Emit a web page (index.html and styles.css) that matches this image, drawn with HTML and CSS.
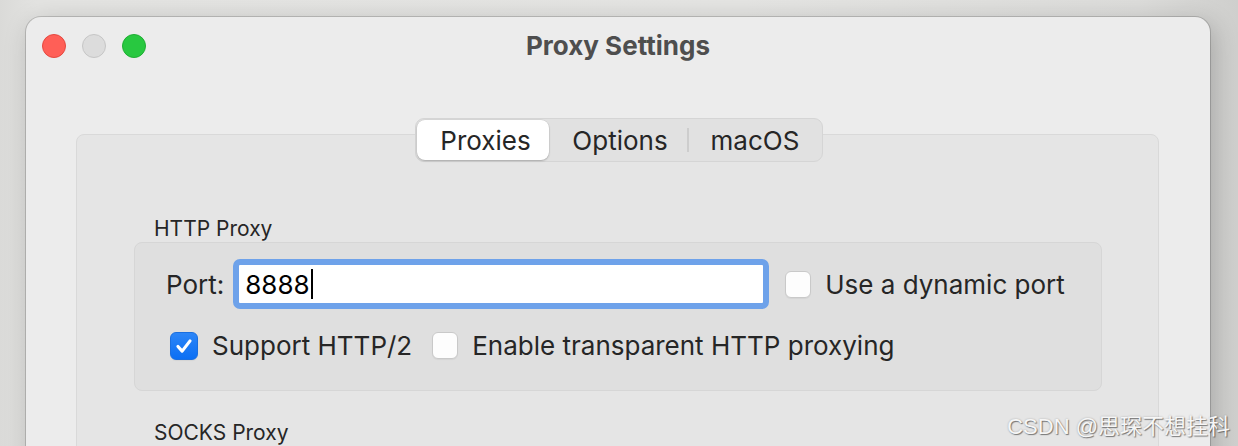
FILE: index.html
```html
<!DOCTYPE html>
<html lang="en">
<head>
<meta charset="utf-8">
<title>Proxy Settings</title>
<link rel="stylesheet" href="styles.css">
</head>
<body>
  <div class="window">
    <header class="titlebar">
      <div class="lights">
        <span class="light close"></span>
        <span class="light min"></span>
        <span class="light zoom"></span>
      </div>
      <h1 class="title">Proxy Settings</h1>
      <div class="spacer"></div>
    </header>

    <main class="content">
      <nav class="segmented">
        <button class="seg seg-proxies active">Proxies</button>
        <button class="seg seg-options">Options</button>
        <span class="seg-divider"></span>
        <button class="seg seg-macos">macOS</button>
      </nav>

      <section class="tabpanel">
        <div class="group-label">HTTP Proxy</div>
        <div class="group">
          <div class="row row-port">
            <label class="field-label">Port:</label>
            <div class="textfield">
              <span class="value">8888</span><span class="caret"></span>
            </div>
            <label class="check">
              <span class="box"></span>
              <span class="check-text">Use a dynamic port</span>
            </label>
          </div>
          <div class="row row-options">
            <label class="check">
              <span class="box checked">
                <svg viewBox="0 0 28 28" width="28" height="28"><path d="M7.5 14.5 L12 19.5 L20.5 8.5" fill="none" stroke="#fff" stroke-width="3.4" stroke-linecap="round" stroke-linejoin="round"/></svg>
              </span>
              <span class="check-text">Support HTTP/2</span>
            </label>
            <label class="check">
              <span class="box"></span>
              <span class="check-text">Enable transparent HTTP proxying</span>
            </label>
          </div>
        </div>
        <div class="group-label socks">SOCKS Proxy</div>
      </section>
    </main>
  </div>
  <div class="watermark">CSDN @思琛不想挂科</div>
</body>
</html>
```
FILE: styles.css
```css
html, body {
  margin: 0;
  height: 100%;
  overflow: hidden;
}

body {
  background: linear-gradient(90deg, #dadad8 0%, #e3e3e1 3%, #e4e4e2 60%, #dcdcda 92%, #cfcfcd 100%);
  font-family: Inter, "Liberation Sans", "Noto Sans CJK SC", sans-serif;
  color: #262626;
  position: relative;
  display: flex;
  align-items: flex-start;
}

.window {
  margin: 17px 0 0 26px;
  width: 1184px;
  height: 520px;
  background: #ececec;
  border-radius: 15px;
  box-shadow: 0 0 0 1px rgba(0, 0, 0, 0.16), 4px 6px 26px rgba(0, 0, 0, 0.22);
  display: flex;
  flex-direction: column;
}

/* title bar */
.titlebar {
  display: grid;
  grid-template-columns: 1fr auto 1fr;
  align-items: center;
  height: 57px;
  padding: 0 16px;
}

.lights {
  display: flex;
  gap: 16px;
  padding-top: 1px;
}

.light {
  width: 24px;
  height: 24px;
  border-radius: 50%;
  box-sizing: border-box;
}

.light.close { background: #ff5f57; border: 1px solid #e5483f; }
.light.min { background: #dcdcdc; border: 1px solid #c6c6c6; }
.light.zoom { background: #28c840; border: 1px solid #1fae33; }

.title {
  margin: 0;
  font-size: 26px;
  font-weight: 700;
  color: #4e4e4e;
  padding-bottom: 1px;
}

/* content / tab view */
.content {
  display: flex;
  flex-direction: column;
  align-items: center;
  padding: 44px 51px 0 50px;
}

.segmented {
  position: relative;
  z-index: 1;
  display: flex;
  align-items: center;
  height: 44px;
  box-sizing: border-box;
  padding: 1px;
  background: #e1e1e1;
  border: 1px solid #d5d5d5;
  border-radius: 9px;
  margin-left: 3px;
}

.seg {
  font: inherit;
  font-size: 26px;
  color: #262626;
  background: transparent;
  border: none;
  height: 40px;
  padding: 0;
  margin: 0;
  border-radius: 8px;
}

.seg-proxies { width: 132px; padding-left: 5px; }
.seg-options { width: 138px; padding-left: 4px; }
.seg-macos { width: 132px; }

.seg.active {
  background: #ffffff;
  box-shadow: 0 1px 2px rgba(0, 0, 0, 0.22), 0 0 0 0.5px rgba(0, 0, 0, 0.08);
}

.seg-divider {
  width: 2px;
  height: 24px;
  background: #cdcdcd;
}

.tabpanel {
  align-self: stretch;
  margin-top: -28px;
  height: 400px;
  box-sizing: border-box;
  background: #e5e5e5;
  border: 1px solid #d9d9d9;
  border-radius: 8px;
  padding: 81px 56px 0 57px;
  display: flex;
  flex-direction: column;
}

.group-label {
  font-size: 21px;
  line-height: 26px;
  padding-left: 20px;
  color: #262626;
}

.group-label.socks {
  margin-top: 29px;
}

.group {
  background: #dfdfdf;
  border: 1px solid #d6d6d6;
  border-radius: 8px;
  padding: 16px 0 29px;
  display: flex;
  flex-direction: column;
  gap: 21px;
}

.row {
  display: flex;
  align-items: center;
}

.row-port {
  padding-left: 31px;
}

.row-options {
  padding-left: 35px;
  gap: 20px;
}

.field-label {
  font-size: 26px;
  margin-right: 9px;
}

.textfield {
  width: 536px;
  height: 50px;
  box-sizing: border-box;
  border: 6px solid #6ea2ea;
  border-radius: 7px;
  background: #ffffff;
  display: flex;
  align-items: center;
  padding-left: 6px;
  margin-right: 16px;
}

.textfield .value {
  font-size: 26px;
  color: #000;
}

.caret {
  width: 2px;
  height: 30px;
  background: #000;
  margin-left: 1px;
}

.check {
  display: flex;
  align-items: center;
  gap: 14px;
}

.box {
  width: 26px;
  height: 27px;
  box-sizing: border-box;
  background: #fdfdfd;
  border: 1px solid #c9c9c9;
  border-radius: 6px;
  box-shadow: 0 1px 1px rgba(0, 0, 0, 0.05);
  display: flex;
  align-items: center;
  justify-content: center;
}

.box.checked {
  width: 28px;
  height: 28px;
  background: linear-gradient(#2d86f7, #0b6ff4);
  border: 1px solid #1a6fe0;
}

.box.checked svg {
  display: block;
}

.check-text {
  font-size: 26px;
  color: #262626;
}

.watermark {
  position: absolute;
  right: 8px;
  bottom: 6px;
  font-size: 22px;
  color: #f6f6f6;
  text-shadow: 1px 1px 1px rgba(0, 0, 0, 0.45), 0 0 2px rgba(0, 0, 0, 0.25);
  font-family: "Liberation Sans", "Noto Sans CJK SC", sans-serif;
}
```
